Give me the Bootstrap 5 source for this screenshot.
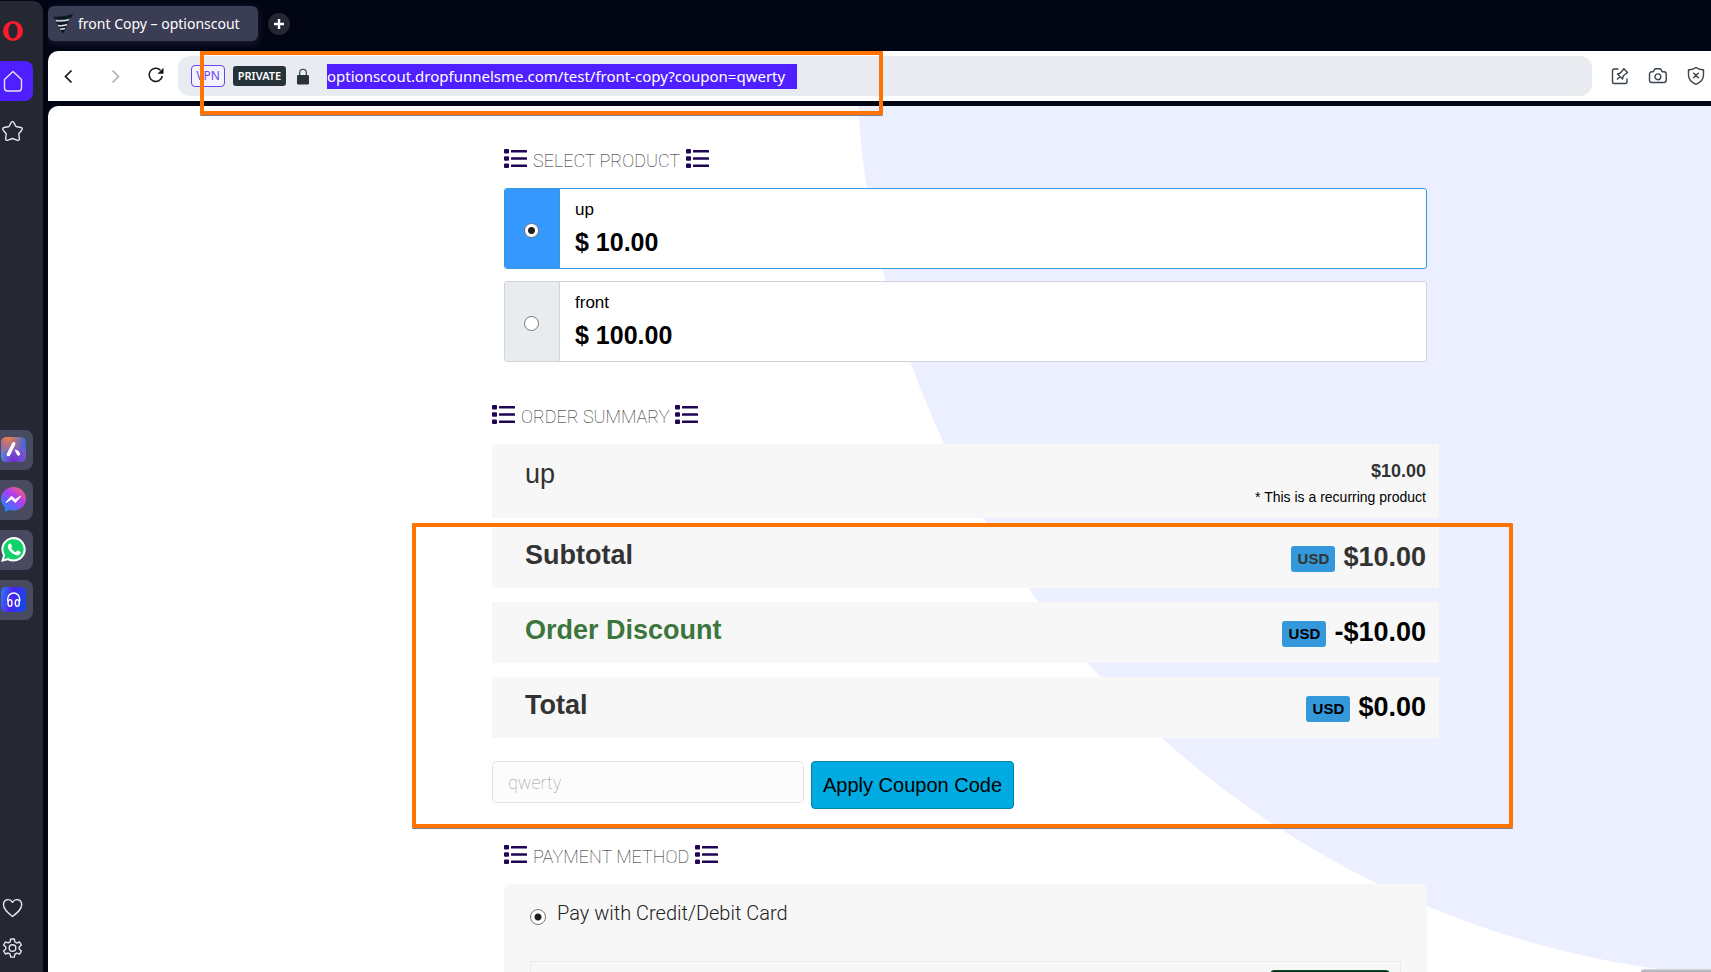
<!DOCTYPE html>
<html lang="en">
<head>
<meta charset="utf-8">
<meta name="viewport" content="width=device-width, initial-scale=1">
<title>front Copy – optionscout</title>
<link href="https://cdn.jsdelivr.net/npm/bootstrap@5.3.0/dist/css/bootstrap.min.css" rel="stylesheet">
<style>
  body { background: #020514; font-family: "Liberation Sans", Arial, sans-serif; color: #000; }
  svg { display: block; flex: none; }
  button { border: 0; background: none; padding: 0; color: inherit; }

  /* browser side panel */
  .side-panel { width: 43px; flex: none; background: #252833; border-radius: 0 10px 0 0; padding: 10px 0 4px; margin: 1px 5px 0 0; gap: 10px; color: #e4e6ee; }
  .side-item { width: 33px; height: 40px; display: flex; align-items: center; padding-left: 1px; border-radius: 0 8px 8px 0; }
  .side-item.home { background: #4f1fff; }
  .side-apps { gap: 10px; padding-top: 10px; }
  .side-apps .side-item { background: #484a60; }

  /* tab strip and toolbar */
  .chrome-text { font-family: "Noto Sans", "Open Sans", sans-serif; }
  .tab-strip { height: 51px; flex: none; padding-top: 6px; gap: 10px; }
  .page-tab { width: 210px; height: 35px; background: #3b3d54; border-radius: 6px; color: #fff; font-size: 14px; padding-left: 5px; gap: 5px; box-shadow: 0 2px 8px #3b3d5480; }
  .new-tab { width: 22px; height: 22px; border-radius: 50%; background: #252833; display: grid; place-items: center; margin-top: 7px; }
  .toolbar { height: 50px; background: #fff; border-radius: 10px 0 0 0; }
  .nav-keys { width: 130px; padding-left: 11px; gap: 24px; color: #14161c; }
  .address { background: #e8ecf0; height: 40px; border-radius: 12px; padding-left: 13px; }
  .tag-vpn { width: 34px; height: 22px; border: 1px solid #6a45f5; border-radius: 4px; color: #6a45f5; font-size: 12px; line-height: 20px; text-align: center; background: #f3f2fd; }
  .tag-private { width: 53px; height: 20px; border-radius: 3px; background: #28323a; color: #fff; font-size: 11px; line-height: 20px; font-weight: 600; text-align: center; margin: 0 11px 0 8px; }
  .url-box { width: 470px; height: 25px; border: 0; padding: 0; margin-left: 18px; background: #4f1fff; color: #fff; font-size: 15px; }
  .tools { gap: 18px; padding: 0 5px 0 18px; color: #39434b; }

  /* marker frames laid over the window */
  .marker { position: absolute; border: 4px solid #ff7300; border-radius: 1px; box-shadow: 0 1px 0 #7d8088; pointer-events: none; }
  .marker-url { left: 22px; top: -5px; width: 683px; height: 64px; z-index: 3; }
  .marker-order { left: -80px; right: -74px; top: 79px; height: 305px; }

  /* checkout page */
  .page { margin-top: 5px; border-radius: 10px 0 0 0; overflow: hidden; min-height: 0;
    background: radial-gradient(circle at calc(100% + 73px) -56px, #ebefff 927px, #fff 928px); padding: 39px 0 0 172px; }
  .checkout { max-width: 947px; margin: 0 auto; }
  .inset { padding: 0 12px; }
  .step-title { font-family: Roboto, sans-serif; font-weight: 100; font-size: 18px; line-height: 26px; margin: 0 0 14px; text-transform: uppercase; display: flex; align-items: center; gap: 6px; color: #111; }
  .step-title svg { color: #1f0453; margin-bottom: 3px; }
  .step-title span { padding-top: 3px; }
  .option { display: flex; height: 81px; background: #fff; border: 1px solid #ced4da; border-radius: 3px; margin-bottom: 12px; overflow: hidden; }
  .option-pick { width: 55px; background: #e9ecef; border-right: 1px solid #ced4da; display: grid; place-items: center; padding: 4px 1px 0 0; }
  .option.chosen { border-color: #3498db; }
  .option.chosen .option-pick { background: #3598fe; border-color: #3498db; }
  .option-body { padding: 8px 15px; font-size: 17px; line-height: 26px; }
  .option-body strong { display: block; font-size: 25px; line-height: 38px; }
  .dot { appearance: none; width: 15px; height: 15px; border: 1px solid #767676; border-radius: 50%; background: #fff; margin: 0; }
  .dot:checked { background: radial-gradient(circle, #1f1f1f 3px, #fff 4px); }

  .order { margin-top: 39px; }
  .line { background: #f7f7f7; height: 61px; padding: 0 13px 0 33px; margin-bottom: 14px; font-size: 27px; color: #333; font-weight: 700; }
  .line dt { line-height: 32px; padding-top: 12px; font-weight: 700; }
  .line dd { margin: 0; line-height: 32px; padding-top: 14px; display: flex; gap: 8px; }
  .line.item { height: 74px; margin-bottom: 9px; }
  .line.item dt { font-weight: 400; padding-top: 14px; }
  .line.item dd { display: block; text-align: right; font-size: 18px; line-height: 26px; padding-top: 14px; }
  .line.item small { display: block; font-size: 14px; font-weight: 400; color: #000; }
  .discount { color: #3c763d; }
  .currency { width: 44px; height: 26px; margin-top: 5px; border-radius: 3px; background: #3498db; font-size: 15px; line-height: 26px; text-align: center; }
  .coupon-row { gap: 7px; margin-top: 23px; }
  .coupon-row .form-control { width: 312px; height: 42px; background: #fcfcfc; border: 1px solid #e4e4e4; border-radius: 4px; font-family: Roboto, sans-serif; font-weight: 100; font-size: 18px; padding: 6px 15px; color: #999; }
  .coupon-row .btn { height: 48px; width: 203px; padding: 0; background: #00abe1; border: 1px solid #0083ab; border-radius: 4px; font-size: 20px; color: #000; }
  .pay { margin-top: 32px; }
  .pay-card { background: #f7f7f7; border-radius: 6px; padding: 16px 26px 40px; }
  .pay-pick { font-family: Roboto, sans-serif; font-weight: 300; font-size: 20px; line-height: 26px; gap: 11px; color: #222; }
  .pay-pick .dot { width: 16px; height: 16px; margin-top: 9px; }
  .pay-form { border: 1px solid #ebebeb; margin-top: 35px; padding: 8px 10px; height: 60px; }
  .pay-form button { width: 120px; height: 36px; background: #022a16; border: 1px solid #04502a; border-radius: 4px; }
  .corner-hint { position: absolute; right: 0; bottom: 0; width: 70px; height: 3px; background: linear-gradient(#d8dae2, #a9abb3); border-radius: 6px 0 0 0; }
</style>
</head>
<body>
<svg width="0" height="0" class="position-absolute" aria-hidden="true">
  <symbol id="list" viewBox="0 0 23 19"><g fill="currentColor"><rect width="5" height="4.500" rx="1"/><rect y="7.200" width="5" height="4.500" rx="1"/><rect y="14.500" width="5" height="4.500" rx="1"/><rect x="7" y="1" width="16" height="2.600" rx=".6"/><rect x="7" y="8.200" width="16" height="2.600" rx=".6"/><rect x="7" y="15.500" width="16" height="2.600" rx=".6"/></g></symbol>
</svg>
<div class="d-flex vh-100 overflow-hidden position-relative">

  <nav class="side-panel d-flex flex-column" aria-label="Browser panel">
    <button class="side-item" aria-label="Opera"><svg width="25" height="24" viewBox="0 0 25 24"><path fill="#ff1b2d" fill-rule="evenodd" d="M12 2a10 10 0 1 0 0 20 10 10 0 0 0 0-20zm0 2.500c2.800 0 4.600 3.200 4.600 7.500s-1.800 7.500-4.600 7.500S7.400 16.300 7.400 12 9.200 4.500 12 4.500z"/></svg></button>
    <button class="side-item home" aria-label="Home"><svg width="24" height="24" viewBox="0 0 24 24" fill="none" stroke="currentColor" stroke-width="1.400" stroke-linejoin="round"><path d="M3.500 10.500 12 2.500l8.500 8V19a3 3 0 0 1-3 3h-11a3 3 0 0 1-3-3z"/></svg></button>
    <button class="side-item" aria-label="Favourites"><svg width="24" height="24" viewBox="0 0 24 24" fill="none" stroke="currentColor" stroke-width="1.400" stroke-linejoin="round"><path d="M10.200 3.600Q11.500 1.200 12.800 3.600L15 7.500l4.800 1Q22.300 9.200 20.700 11.200L17.800 14.800l.6 4.700Q18.400 22 16 21.200L11.500 19.500 7 21.200Q4.600 22 4.700 19.500l.5-4.700-3-3.600Q.8 9.200 3.200 8.500l4.800-1z"/></svg></button>
    <div class="side-apps d-flex flex-column my-auto">
      <button class="side-item" aria-label="Aria"><svg width="25" height="25" viewBox="0 0 25 25"><defs><linearGradient id="ga" x1=".8" y1="0" x2=".2" y2="1"><stop offset="0" stop-color="#2e6be0"/><stop offset=".5" stop-color="#7a5bc8"/><stop offset="1" stop-color="#4a9fe0"/></linearGradient><radialGradient id="gb" cx=".3" cy="0" r=".7"><stop offset="0" stop-color="#f0813f"/><stop offset="1" stop-color="#f0813f" stop-opacity="0"/></radialGradient><radialGradient id="gc" cx=".5" cy="1" r=".6"><stop offset="0" stop-color="#7a1fd0"/><stop offset="1" stop-color="#7a1fd0" stop-opacity="0"/></radialGradient></defs><rect width="25" height="25" rx="5" fill="url(#ga)"/><rect width="25" height="25" rx="5" fill="url(#gb)"/><rect width="25" height="25" rx="5" fill="url(#gc)"/><path fill="#fff" d="M11.500 5.500q2-1.200 2.800.6.200 1-.3 2L9 18.500q-1.300 1.500-3 .2-.8-1-.2-2zM13.500 12.500q3 0 4.500 2l1 2q.6 2-1.200 2.300-1.500 0-2.200-1.800z"/></svg></button>
      <button class="side-item" aria-label="Messenger"><svg width="25" height="25" viewBox="0 0 25 25"><defs><linearGradient id="gm" x1=".9" y1="0" x2=".1" y2="1"><stop offset="0" stop-color="#ff6968"/><stop offset=".4" stop-color="#b13af0"/><stop offset="1" stop-color="#0a90ff"/></linearGradient></defs><path fill="url(#gm)" d="M12.500 0C5.500 0 0 5 0 12c0 3.500 1.500 6.500 4 8.600V25l4-2.200c1.400.4 3 .6 4.500.6 7 0 12.500-5 12.500-11.600S19.500 0 12.500 0z"/><path fill="#fff" d="m5 15.500 5.300-6.300 4 3.300 5.700-3.500-5.500 6.500-4-3.400z" stroke="#fff" stroke-linejoin="round"/></svg></button>
      <button class="side-item" aria-label="WhatsApp"><svg width="25" height="25" viewBox="0 0 25 25"><path fill="#fff" d="M12.700 0A12.300 12.300 0 0 0 2 18.400L0 25l6.700-1.800A12.300 12.300 0 1 0 12.700 0z"/><path fill="#10d26a" d="M12.700 2.200A10.100 10.100 0 0 0 4.200 18L3 22l4.200-1.100A10.100 10.100 0 1 0 12.700 2.200z"/><path fill="#fff" d="M8.600 6.500q1-.4 1.500.6l.9 2.200q.2.600-.9 1.800 1.700 3 4.600 4.100l1.300-1.500q.4-.4 1-.1l2.200 1.100q.6.300.4 1.100-.7 2.500-3.500 2.600-3 0-6.300-3.300-3.200-3.200-3-5.600.2-2.200 1.800-3z"/></svg></button>
      <button class="side-item" aria-label="Player"><svg width="25" height="25" viewBox="0 0 25 25" fill="none" stroke="#fff" stroke-width="1.400"><defs><linearGradient id="gp" x2="1" y2=".2"><stop offset="0" stop-color="#2f7cff"/><stop offset=".5" stop-color="#4a22f0"/><stop offset="1" stop-color="#1646e8"/></linearGradient></defs><rect width="25" height="25" rx="5" fill="url(#gp)" stroke="none"/><path d="M6.700 14.500V12a6 6 0 0 1 12 0v2.500"/><ellipse cx="9" cy="16" rx="2" ry="3.400"/><ellipse cx="16.300" cy="16" rx="2" ry="3.400"/></svg></button>
    </div>
    <div>
      <button class="side-item" aria-label="Saved"><svg width="24" height="24" viewBox="0 0 24 24" fill="none" stroke="currentColor" stroke-width="1.400" stroke-linejoin="round"><path d="M11.500 20.500C7 17 2.500 13.500 2.500 8.800 2.500 3 9 2 11.500 6.300 14 2 20.700 3 20.700 8.800c0 4.700-4.700 8.200-9.200 11.700z"/></svg></button>
      <button class="side-item" aria-label="Settings"><svg width="24" height="24" viewBox="0 0 24 24" fill="none" stroke="currentColor" stroke-width="1.400" stroke-linejoin="round"><circle cx="11.500" cy="12" r="3.300"/><path d="M9.700 3h3.600l.6 2.900 1.900 1.100 2.800-1 1.800 3.100-2.200 2v1.900l2.200 2-1.800 3.100-2.800-1-1.900 1.100-.6 2.900H9.700l-.6-2.900L7.200 17l-2.800 1-1.800-3.100 2.200-2V11l-2.200-2 1.800-3.100 2.800 1 1.900-1.100z"/></svg></button>
    </div>
  </nav>

  <div class="d-flex flex-column flex-grow-1 overflow-hidden">
    <header class="tab-strip d-flex align-items-start">
      <div class="page-tab chrome-text d-flex align-items-center">
        <svg width="20" height="20" viewBox="0 0 20 20"><path fill="#0b1820" d="M0 2.500Q10 3.500 20 0L18 4Q10 6 2 5zM3 8q7 1 13-1l-1.500 2.500Q10 11 5 10.500zM5.500 13q4 .5 8-.8L10 20z"/><path stroke="#e8eaf0" stroke-width="1.300" fill="none" d="M3 6.700q7 .8 13-1M5 11.700q5 .5 9-1M7 15.200q3 0 5-.8"/></svg>
        <span>front Copy – optionscout</span>
      </div>
      <button class="new-tab" aria-label="New tab"><svg width="10" height="10" viewBox="0 0 10 10" stroke="#fff" stroke-width="2.400"><path d="M5 0v10M0 5h10"/></svg></button>
    </header>

    <div class="toolbar d-flex align-items-center flex-shrink-0">
      <div class="nav-keys d-flex align-items-center flex-shrink-0">
        <button aria-label="Back"><svg width="20" height="20" viewBox="0 0 20 20" fill="none" stroke="currentColor" stroke-width="1.700"><path d="m12.500 4.500-6 6 6 6"/></svg></button>
        <button aria-label="Forward"><svg width="20" height="20" viewBox="0 0 20 20" fill="none" stroke="#a9adb3" stroke-width="1.500"><path d="m9.500 4.500 6 6-6 6"/></svg></button>
        <button aria-label="Reload"><svg width="20" height="20" viewBox="0 0 20 20" fill="none" stroke="currentColor" stroke-width="1.500"><path d="M13.500 4.200a6.600 6.600 0 1 0 1.800 5.800"/><path fill="currentColor" stroke="none" d="M16.500 1.800v6h-6z"/></svg></button>
      </div>
      <div class="address chrome-text d-flex align-items-center flex-grow-1 position-relative">
        <span class="tag-vpn">VPN</span>
        <span class="tag-private">PRIVATE</span>
        <svg width="12" height="17" viewBox="0 0 12 17"><rect y="7" width="12" height="9.500" rx="1.300" fill="#28323a"/><path d="M2.700 7.500V4.500a3.300 3.300 0 0 1 6.600 0v3" fill="none" stroke="#28323a" stroke-width="1.100"/></svg>
        <input class="url-box" type="text" aria-label="Address" value="optionscout.dropfunnelsme.com/test/front-copy?coupon=qwerty">
        <div class="marker marker-url"></div>
      </div>
      <div class="tools d-flex">
        <button aria-label="Pin page"><svg width="20" height="20" viewBox="0 0 20 20" fill="none" stroke="currentColor" stroke-width="1.400" stroke-linejoin="round"><path d="M8.500 3H4a1.500 1.500 0 0 0-1.500 1.500V16A1.500 1.500 0 0 0 4 17.500h11.500A1.500 1.500 0 0 0 17 16v-3.500M7 13.500l3-3M7.500 8l5 5 .8-3.200 4.200-3.300-3.600-3.700-3.500 4.200z"/></svg></button>
        <button aria-label="Snapshot"><svg width="20" height="20" viewBox="0 0 20 20" fill="none" stroke="currentColor" stroke-width="1.400" stroke-linejoin="round"><path d="M1.500 8A2.300 2.300 0 0 1 4 5.700h1.300L6.500 3.500Q7 2.800 8 2.800h3.500q1 0 1.500.7l1.200 2.200H16A2.300 2.300 0 0 1 18.200 8v6.200a2.300 2.300 0 0 1-2.300 2.300H3.800a2.300 2.300 0 0 1-2.300-2.300z"/><circle cx="9.900" cy="10.800" r="2.900"/></svg></button>
        <button aria-label="Blocker"><svg width="20" height="20" viewBox="0 0 20 20" fill="none" stroke="currentColor" stroke-width="1.400" stroke-linejoin="round"><path d="M10 1.500q3 2.500 7.500 2.300V9q0 6-7.500 9.300Q2.500 15 2.500 9V3.800Q7 4 10 1.500zM7.300 6.800l5.400 5.400M12.700 6.800l-5.400 5.400"/></svg></button>
      </div>
    </div>

    <main class="page flex-grow-1">
      <div class="checkout">
        <section class="inset">
          <h2 class="step-title"><svg width="23" height="19"><use href="#list"/></svg><span>Select Product</span><svg width="23" height="19"><use href="#list"/></svg></h2>
          <label class="option chosen">
            <span class="option-pick"><input class="dot" type="radio" name="product" checked></span>
            <span class="option-body">up<strong>$ 10.00</strong></span>
          </label>
          <label class="option">
            <span class="option-pick"><input class="dot" type="radio" name="product"></span>
            <span class="option-body">front<strong>$ 100.00</strong></span>
          </label>
        </section>

        <section class="order">
          <h2 class="step-title"><svg width="23" height="19"><use href="#list"/></svg><span>Order Summary</span><svg width="23" height="19"><use href="#list"/></svg></h2>
          <div class="position-relative">
            <dl class="mb-0">
              <div class="line item d-flex justify-content-between"><dt>up</dt><dd>$10.00<small>* This is a recurring product</small></dd></div>
              <div class="line d-flex justify-content-between"><dt>Subtotal</dt><dd><span class="currency">USD</span>$10.00</dd></div>
              <div class="line d-flex justify-content-between"><dt class="discount">Order Discount</dt><dd class="text-black"><span class="currency">USD</span>-$10.00</dd></div>
              <div class="line d-flex justify-content-between mb-0"><dt>Total</dt><dd class="text-black"><span class="currency">USD</span>$0.00</dd></div>
            </dl>
            <form class="coupon-row d-flex align-items-start">
              <input class="form-control" type="text" aria-label="Coupon code" value="qwerty">
              <button class="btn" type="button">Apply Coupon Code</button>
            </form>
            <div class="marker marker-order"></div>
          </div>
        </section>

        <section class="inset pay">
          <h2 class="step-title"><svg width="23" height="19"><use href="#list"/></svg><span>Payment Method</span><svg width="23" height="19"><use href="#list"/></svg></h2>
          <div class="pay-card">
            <div class="pay-pick d-flex align-items-start">
              <input class="dot" type="radio" id="card" name="method" checked><label for="card">Pay with Credit/Debit Card</label>
            </div>
            <div class="pay-form d-flex justify-content-end"><button type="button" aria-label="Autofill"></button></div>
          </div>
        </section>
      </div>
    </main>
  </div>
  <div class="corner-hint"></div>
</div>
<script src="https://cdn.jsdelivr.net/npm/bootstrap@5.3.0/dist/js/bootstrap.bundle.min.js"></script>
</body>
</html>
